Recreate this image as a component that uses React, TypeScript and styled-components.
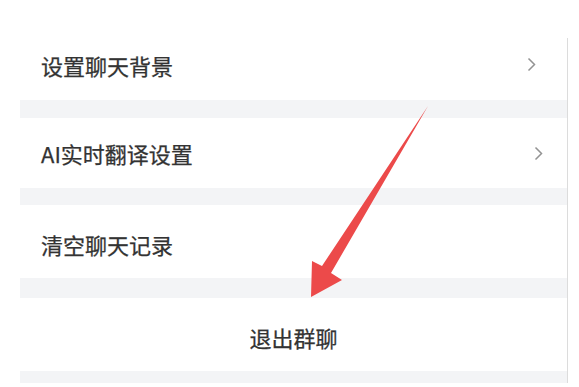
import React from "react";
import styled, { createGlobalStyle } from "styled-components";

const GlobalStyle = createGlobalStyle`
  html, body {
    margin: 0;
    padding: 0;
    background: #ffffff;
  }
  body {
    font-family: "Noto Sans CJK SC", "Noto Sans", sans-serif;
  }
`;

const Page = styled.div`
  position: relative;
  width: 579px;
  height: 387px;
  padding: 38px 11px 0 20px;
  box-sizing: border-box;
  overflow: hidden;
`;

const Panel = styled.div`
  display: flex;
  flex-direction: column;
  border-right: 1px solid #dcdcdc;
  background: #ffffff;
`;

const Row = styled.div<{ $h: number; $center?: boolean }>`
  height: ${(p) => p.$h}px;
  display: flex;
  align-items: center;
  justify-content: ${(p) => (p.$center ? "center" : "space-between")};
  padding: 0 0 0 21px;
  box-sizing: border-box;
`;

const Label = styled.span<{ $center?: boolean; $dy?: number }>`
  font-size: 22px;
  line-height: 1;
  color: #333333;
  -webkit-text-stroke: 0.25px #333333;
  margin-left: ${(p) => (p.$center ? "-21px" : "0")};
  transform: translateY(${(p) => p.$dy ?? 0}px);
`;

const Gap = styled.div<{ $h: number }>`
  height: ${(p) => p.$h}px;
  background: #f3f4f6;
`;

const Chevron = styled.svg<{ $right: number; $dy?: number }>`
  width: 9px;
  height: 15px;
  margin-right: ${(p) => p.$right}px;
  flex-shrink: 0;
  transform: translateY(${(p) => p.$dy ?? 0}px);
`;

const Arrow = styled.svg`
  position: absolute;
  left: 0;
  top: 0;
  pointer-events: none;
`;

const ChevronIcon = ({ right, dy }: { right: number; dy?: number }) => (
  <Chevron $right={right} $dy={dy} viewBox="0 0 9 15">
    <path d="M1.5 1.5 L7.5 7.5 L1.5 13.5" fill="none" stroke="#939393" strokeWidth="1.5" />
  </Chevron>
);

const App = () => {
  return (
    <>
      <GlobalStyle />
      <Page>
        <Panel>
          <Row $h={62}>
            <Label $dy={-4}>设置聊天背景</Label>
            <ChevronIcon right={31} dy={-5} />
          </Row>
          <Gap $h={18} />
          <Row $h={70}>
            <Label $dy={0}>AI实时翻译设置</Label>
            <ChevronIcon right={24} dy={0} />
          </Row>
          <Gap $h={17} />
          <Row $h={73}>
            <Label $dy={2}>清空聊天记录</Label>
          </Row>
          <Gap $h={20} />
          <Row $h={73} $center>
            <Label $center $dy={2}>退出群聊</Label>
          </Row>
          <Gap $h={12} />
        </Panel>
        <Arrow width="579" height="387" viewBox="0 0 579 387">
          <polygon
            points="428,106 322,266 312,261 311,297 342,280 331,273"
            fill="#ec4a4a"
          />
        </Arrow>
      </Page>
    </>
  );
};

export default App;
